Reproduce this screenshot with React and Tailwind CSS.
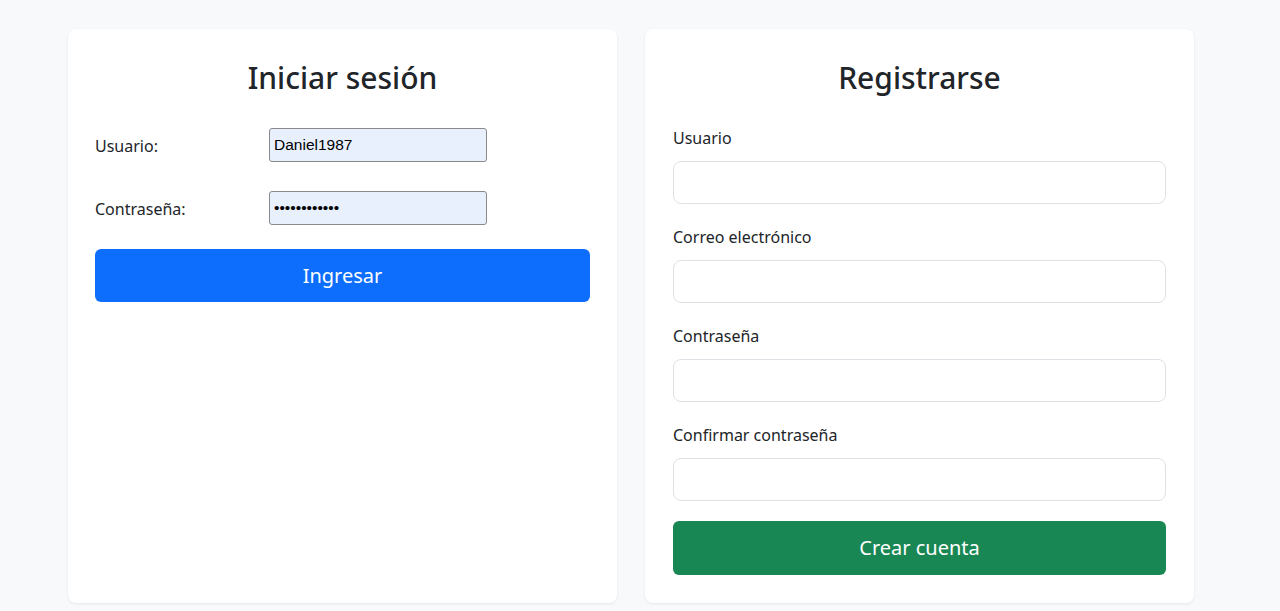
export default function App() {
  return (
    <main className="min-h-[611px] bg-[#f8f9fa] font-['Noto_Sans',sans-serif] text-[#212529]">
      <div className="flex gap-[28px] pl-[68px] pt-[29px] pb-[8px]">
        {/* login */}
        <section className="w-[549px] bg-white rounded-lg shadow-[0_1px_3px_rgba(0,0,0,0.08)] px-[27px] pt-[30px] pb-[28px]">
          <h2 className="text-[30px] leading-[38px] font-medium text-center">Iniciar sesión</h2>

          <form className="mt-[31px]">
            <div className="flex items-center">
              <label htmlFor="user" className="w-[174px] text-base pt-[2px]">Usuario:</label>
              <input
                id="user"
                defaultValue="Daniel1987"
                className="w-[218px] h-[34px] bg-[#e8f0fe] border border-[#8a8a8a] rounded-[3px] px-[4px] text-[15.5px] text-black font-['Liberation_Sans',sans-serif]"
              />
            </div>
            <div className="flex items-center mt-[29px]">
              <label htmlFor="pass" className="w-[174px] text-base pt-[2px]">Contraseña:</label>
              <input
                id="pass"
                type="password"
                defaultValue="daniel123456"
                className="w-[218px] h-[34px] bg-[#e8f0fe] border border-[#8a8a8a] rounded-[3px] px-[4px] text-[15.5px] text-black font-['Liberation_Sans',sans-serif]"
              />
            </div>
            <button type="button" className="w-full h-[53px] mt-[24px] bg-[#0d6efd] text-white text-[20px] rounded-md">
              Ingresar
            </button>
          </form>
        </section>

        {/* registro */}
        <section className="w-[549px] bg-white rounded-lg shadow-[0_1px_3px_rgba(0,0,0,0.08)] px-[28px] pt-[30px] pb-[28px]">
          <h2 className="text-[30px] leading-[38px] font-medium text-center">Registrarse</h2>

          <form className="mt-[29px]">
            {["Usuario", "Correo electrónico", "Contraseña", "Confirmar contraseña"].map((campo) => (
              <div key={campo} className="mb-[21px]">
                <label className="block text-base leading-6 mb-[11px]">{campo}</label>
                <input
                  type={campo.toLowerCase().includes("contraseña") ? "password" : "text"}
                  className="w-full h-[43px] border border-[#dee2e6] rounded-lg px-3"
                />
              </div>
            ))}
            <button type="button" className="w-full h-[54px] -mt-px bg-[#198754] text-white text-[20px] rounded-md">
              Crear cuenta
            </button>
          </form>
        </section>
      </div>
    </main>
  );
}
